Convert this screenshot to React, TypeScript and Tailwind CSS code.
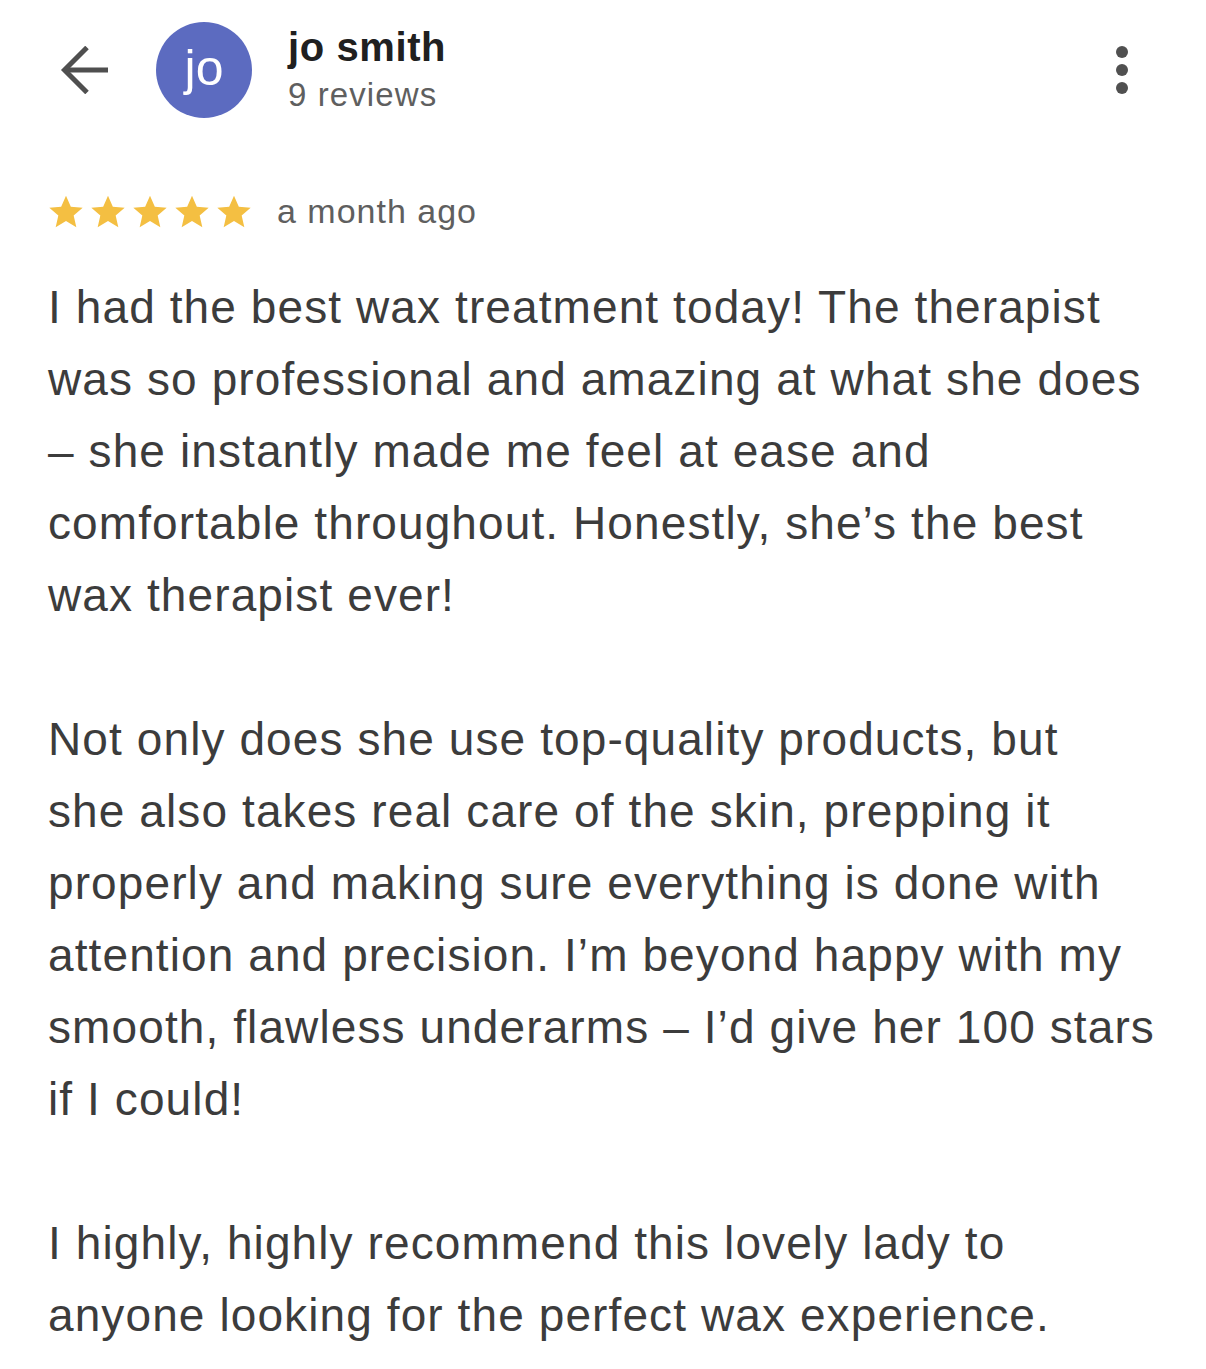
const paragraphs: string[][] = [
  [
    "I had the best wax treatment today! The therapist",
    "was so professional and amazing at what she does",
    "– she instantly made me feel at ease and",
    "comfortable throughout. Honestly, she’s the best",
    "wax therapist ever!",
  ],
  [
    "Not only does she use top-quality products, but",
    "she also takes real care of the skin, prepping it",
    "properly and making sure everything is done with",
    "attention and precision. I’m beyond happy with my",
    "smooth, flawless underarms – I’d give her 100 stars",
    "if I could!",
  ],
  [
    "I highly, highly recommend this lovely lady to",
    "anyone looking for the perfect wax experience.",
  ],
];

function Star() {
  return (
    <svg viewBox="0 0 24 24" className="w-[40px] h-[40px]" fill="#f4bf42">
      <path d="M12 2.2l2.9 6.6 7.1.6-5.4 4.7 1.6 7-6.2-3.7-6.2 3.7 1.6-7L2 9.4l7.1-.6z" />
    </svg>
  );
}

function BackArrow() {
  return (
    <svg viewBox="0 0 48 48" className="w-[48px] h-[48px]" fill="none" stroke="#4f4f4f" strokeWidth={5} strokeLinecap="butt" strokeLinejoin="miter">
      <path d="M48 24H4" />
      <path d="M27 1.5 4.5 24 27 46.5" />
    </svg>
  );
}

export default function App() {
  return (
    <div
      className="min-h-screen bg-white text-[#3c3c3c]"
      style={{ fontFamily: '"Liberation Sans", Arial, sans-serif' }}
    >
      <header className="flex items-center h-[140px] pl-[60px] pr-[78px]">
        <BackArrow />
        <div className="ml-[48px] w-[96px] h-[96px] rounded-full bg-[#5c6bc0] flex items-center justify-center text-white text-[50px] leading-none pb-[4px]">
          jo
        </div>
        <div className="ml-[36px] flex flex-col pt-[2px]">
          <span className="text-[40px] leading-[48px] font-bold tracking-[0.6px] text-[#202020]">jo smith</span>
          <span className="text-[33px] leading-[48px] tracking-[1.1px] text-[#5f5f5f]">9 reviews</span>
        </div>
        <div className="ml-auto flex flex-col gap-[6px] items-center">
          <span className="w-[12px] h-[12px] rounded-full bg-[#505050]" />
          <span className="w-[12px] h-[12px] rounded-full bg-[#505050]" />
          <span className="w-[12px] h-[12px] rounded-full bg-[#505050]" />
        </div>
      </header>

      <div className="flex items-center pl-[46px] mt-[46px]">
        <div className="flex gap-[2px]">
          <Star />
          <Star />
          <Star />
          <Star />
          <Star />
        </div>
        <span className="ml-[23px] text-[34px] tracking-[1px] text-[#5f5f5f]">a month ago</span>
      </div>

      <div className="pl-[48px] pr-[20px] mt-[34px] text-[46px] leading-[72px] tracking-[1.1px]">
        {paragraphs.map((lines, i) => (
          <p key={i} className={i > 0 ? "mt-[72px]" : ""}>
            {lines.map((line) => (
              <span key={line} className="block whitespace-nowrap">
                {line}
              </span>
            ))}
          </p>
        ))}
      </div>
    </div>
  );
}
